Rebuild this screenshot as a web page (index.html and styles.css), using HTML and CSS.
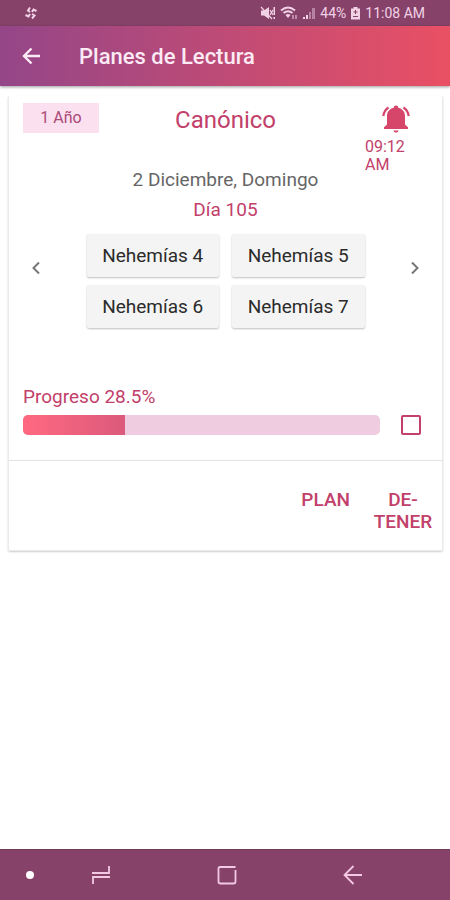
FILE: index.html
```html
<!DOCTYPE html>
<html lang="es">
<head>
<meta charset="utf-8">
<meta name="viewport" content="width=device-width, initial-scale=1">
<title>Planes de Lectura</title>
<link rel="stylesheet" href="styles.css">
</head>
<body>
<div class="status">
  <svg class="pinwheel" width="14" height="14" viewBox="0 0 14 14" fill="none" stroke="currentColor" stroke-width="2" aria-hidden="true"><path d="M6 6L4 4.500 6 1.500M8 6l1.500-2.500L12.500 5M8 8l2.500 1.500L8 12.500M6 8L4.500 10.500 1.500 9"/></svg>
  <div class="status-info">
    <svg width="16" height="14" viewBox="0 0 16 14" fill="currentColor" aria-hidden="true"><path d="M1 4.500h3l5-3.500v12L4 9.500H1z"/><path d="M10 4l3 5M13 4l-3 5M1 1l11 12" stroke="currentColor" stroke-width="1.200"/><path d="M13.500 1h1.500v8h-1.500zM13.500 11h1.500v2h-1.500z"/></svg>
    <svg width="18" height="14" viewBox="0 0 18 14" fill="none" stroke="currentColor" stroke-width="2" aria-hidden="true"><path d="M1 4.500Q8 -1.500 15 4.500M3.500 7Q8 3.500 12.500 7"/><path d="M5.500 9Q8 7 10.500 9L8 12z" fill="currentColor" stroke="none"/><path d="M13 9v4M16 9v4" stroke-width="1"/></svg>
    <svg width="14" height="14" viewBox="0 0 14 14" fill="currentColor" aria-hidden="true"><path d="M1 11h2v2H1zM4 9h2v4H4z"/><path d="M7 6h2v7H7zM10 2h3v11h-3z" opacity=".45"/></svg>
    <span>44%</span>
    <svg width="11" height="14" viewBox="0 0 11 14" aria-hidden="true"><path d="M3.500 1h4v1.500H10V13.500H1V2.500h2.500z" fill="currentColor"/><path d="M5.500 4v4M3.500 6h4M3 10.500h5" stroke="#87426a"/></svg>
    <span>11:08 AM</span>
  </div>
</div>
<header class="toolbar">
  <button class="icon-button" aria-label="Volver"><svg width="20" height="20" viewBox="0 0 20 20" fill="none" stroke="currentColor" stroke-width="2.400" aria-hidden="true"><path d="M19 10H3M10.500 2.500L3 10l7.500 7.500"/></svg></button>
  <h1>Planes de Lectura</h1>
</header>
<main>
  <article class="card">
    <div class="card-body">
      <div class="card-top">
        <span class="badge">1 Año</span>
        <h2>Canónico</h2>
        <div class="alarm">
          <svg width="28" height="28" viewBox="0 0 28 28" aria-hidden="true"><path d="M14 .5c1.400 0 2.200.9 2.200 2.200C21 4 23 7.200 23 11v8.500l3 2.700V24H2v-1.800l3-2.700V11c0-3.800 2-7 6.800-8.300 0-1.300.8-2.200 2.200-2.200zM11.400 25.500h5.200c-.4 1.400-1.300 2-2.600 2s-2.200-.6-2.600-2z" fill="currentColor"/><path d="M6.500 2.500Q2 5.500 1.300 11M21.500 2.500Q26 5.500 26.700 11" fill="none" stroke="currentColor" stroke-width="2.200"/></svg>
          <time>09:12 AM</time>
        </div>
      </div>
      <p class="date">2 Diciembre, Domingo</p>
      <p class="day">Día 105</p>
      <div class="readings">
        <button class="step" aria-label="Día anterior"><svg width="10" height="14" viewBox="0 0 10 14" fill="none" stroke="currentColor" stroke-width="2" aria-hidden="true"><path d="M8 1.500L2.500 7 8 12.500"/></svg></button>
        <div class="chapters">
          <button>Nehemías 4</button>
          <button>Nehemías 5</button>
          <button>Nehemías 6</button>
          <button>Nehemías 7</button>
        </div>
        <button class="step" aria-label="Día siguiente"><svg width="10" height="14" viewBox="0 0 10 14" fill="none" stroke="currentColor" stroke-width="2" aria-hidden="true"><path d="M2 1.500L7.500 7 2 12.500"/></svg></button>
      </div>
      <p class="progress-label" id="progress-label">Progreso 28.5%</p>
      <div class="progress-row">
        <div class="track" role="progressbar" aria-labelledby="progress-label" aria-valuenow="28.5" aria-valuemin="0" aria-valuemax="100"><div class="fill" style="width:28.5%"></div></div>
        <input type="checkbox" aria-label="Marcar como leído">
      </div>
    </div>
    <footer class="actions">
      <button>PLAN</button>
      <button class="stop">DE-TENER</button>
    </footer>
  </article>
</main>
<nav class="system-nav" aria-label="Sistema">
  <span class="dot"></span>
  <button aria-label="Recientes"><svg width="20" height="20" viewBox="0 0 20 20" fill="none" stroke="currentColor" stroke-width="1.800" aria-hidden="true"><path d="M1 8h17V1M19 12H2v7"/></svg></button>
  <button aria-label="Inicio"><svg width="20" height="20" viewBox="0 0 20 20" fill="none" stroke="currentColor" stroke-width="1.800" aria-hidden="true"><path d="M18.500 2H3Q1.500 2 1.500 3.500V16.500Q1.500 18.500 3.500 18.500H16.500Q18.500 18.500 18.500 16.500V5"/></svg></button>
  <button aria-label="Atrás"><svg width="20" height="20" viewBox="0 0 20 20" fill="none" stroke="currentColor" stroke-width="1.800" aria-hidden="true"><path d="M19 10H2M10.500 1L1.500 10l9 9"/></svg></button>
</nav>
</body>
</html>
```
FILE: styles.css
```css
* { box-sizing: border-box; }
body {
  margin: 0;
  min-height: 100vh;
  display: flex;
  flex-direction: column;
  background: #fff;
  font-family: Roboto, sans-serif;
  color: #c2406a;
}
h1, h2, p { margin: 0; font-weight: 400; }
svg { display: block; flex: none; }
button {
  margin: 0;
  padding: 0;
  border: 0;
  background: none;
  color: inherit;
  font: inherit;
}
.status {
  height: 26px;
  padding: 0 25px 0 24px;
  display: flex;
  align-items: center;
  justify-content: space-between;
  background: #87426a;
  color: #f2d3e6;
  font-size: 14px;
}
.status-info { display: flex; align-items: center; gap: 4px; }
.toolbar {
  height: 60px;
  padding: 0 21px;
  display: flex;
  align-items: center;
  gap: 38px;
  background: linear-gradient(90deg, #944688, #e95064);
  color: #fceaf5;
  box-shadow: 0 1px 3px rgba(0, 0, 0, .4);
}
.toolbar h1 { font-size: 22px; font-weight: 500; }
main { flex: 1; padding: 10px 7px 10px 8px; }
.card {
  border: 1px solid #ebebeb;
  border-top: 0;
  border-radius: 2px;
  box-shadow: 0 1px 2px rgba(0, 0, 0, .2);
}
.card-body { padding: 7px 14px 25px; }
.card-top {
  display: grid;
  grid-template-columns: 76px 1fr 76px;
  align-items: start;
}
.badge {
  background: #fbe0f0;
  color: #ab4a76;
  font-size: 16px;
  line-height: 30px;
  text-align: center;
}
.card-top h2 { font-size: 24px; line-height: 34px; text-align: center; }
.alarm { padding-left: 13px; }
.alarm svg { margin: 2px 0 5px 17px; color: #d5466a; }
.alarm time { display: block; width: 44px; font-size: 16px; line-height: 18px; }
.date, .day { font-size: 19px; line-height: 30px; text-align: center; }
.date { margin-top: -9px; color: #666; }
.readings {
  margin-top: 9px;
  display: flex;
  align-items: flex-start;
  justify-content: space-between;
}
.step { width: 26px; margin-top: 19px; padding: 8px; color: #777; }
.chapters {
  width: 278px;
  display: grid;
  grid-template-columns: 1fr 1fr;
  gap: 8px 13px;
}
.chapters button {
  height: 43px;
  border-radius: 2px;
  background: #f4f4f4;
  box-shadow: 0 1px 2px rgba(0, 0, 0, .25);
  color: #2b2b2b;
  font-size: 19px;
}
.progress-label { margin-top: 57px; font-size: 19px; line-height: 24px; }
.progress-row { margin-top: 6px; display: flex; align-items: center; gap: 21px; }
.track {
  flex: 1;
  height: 20px;
  border-radius: 5px;
  overflow: hidden;
  background: #f0cce1;
}
.fill { height: 100%; background: linear-gradient(90deg, #ff6980, #dc5a7c); }
input[type="checkbox"] {
  appearance: none;
  width: 20px;
  height: 20px;
  margin: 0 7px 0 0;
  border: 2px solid #c2406a;
  border-radius: 2px;
}
.actions {
  padding: 28px 9px 17px;
  display: flex;
  align-items: flex-start;
  justify-content: flex-end;
  gap: 23px;
  border-top: 1px solid #e2e2e2;
  font-size: 19px;
  font-weight: 500;
  line-height: 22px;
}
.stop { width: 60px; }
.system-nav {
  height: 51px;
  display: grid;
  grid-template-columns: 38px repeat(3, 1fr) 34px;
  align-items: center;
  background: #87426a;
  border-top: 1px solid #6f3c5a;
  color: #f2c8e3;
}
.system-nav button { display: grid; place-items: center; }
.dot {
  width: 8px;
  height: 8px;
  margin-left: 26px;
  border-radius: 50%;
  background: #fff;
}
```
